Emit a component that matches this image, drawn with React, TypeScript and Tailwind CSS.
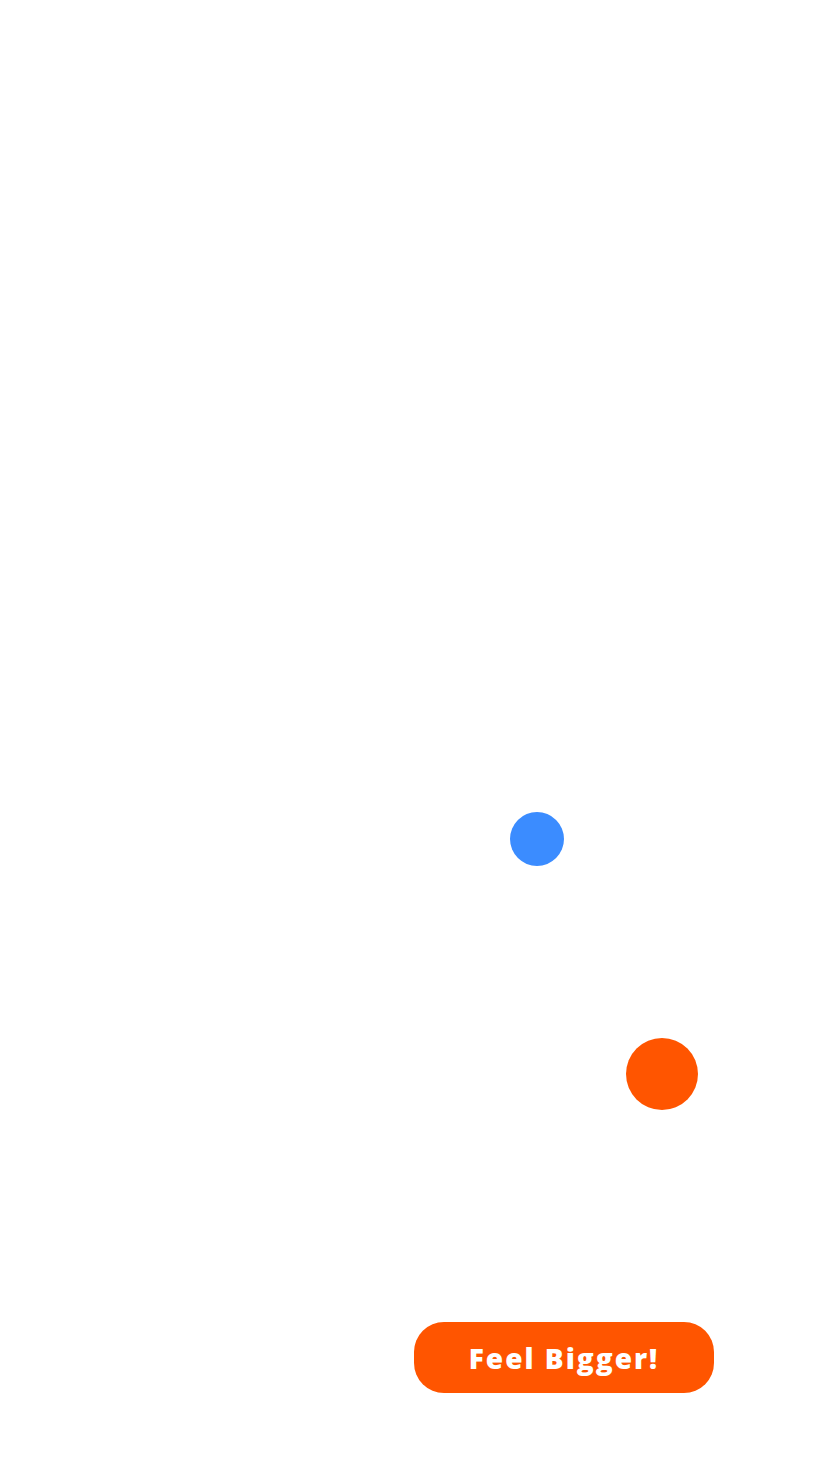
export default function App() {
  return (
    <div className="relative w-full h-[1472px] bg-white overflow-hidden font-['Open_Sans',sans-serif]">
      {/* player dots */}
      <div className="absolute left-[510px] top-[812px] size-[54px] rounded-full bg-[#3b8cff]" />
      <div className="absolute left-[626px] top-[1038px] size-[72px] rounded-full bg-[#ff5500]" />

      <button className="absolute left-[414px] top-[1322px] w-[300px] h-[71px] rounded-[30px] bg-[#ff5500] text-white text-[28px] font-extrabold tracking-[2px] flex items-center justify-center">
        Feel Bigger!
      </button>
    </div>
  );
}
